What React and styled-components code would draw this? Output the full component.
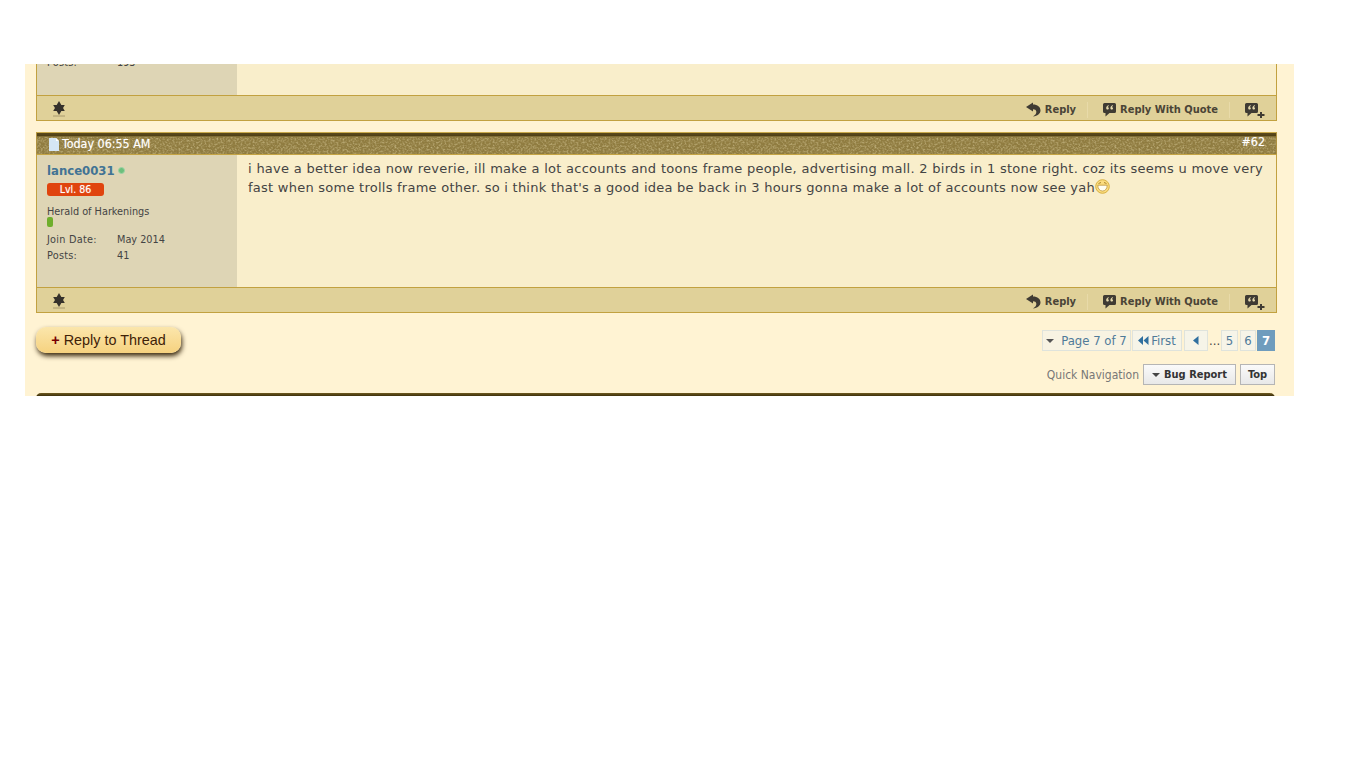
import React from "react";
import styled, { createGlobalStyle } from "styled-components";

const GlobalStyle = createGlobalStyle`
  html, body { margin: 0; padding: 0; background: #fff; }
  body { font-family: "DejaVu Sans", Verdana, sans-serif; }
`;

// speckled leather strip of the post header, dark and light grain
const grain = `url("data:image/svg+xml,%3Csvg xmlns='http://www.w3.org/2000/svg' width='240' height='24'%3E%3Cfilter id='d' x='0' y='0' width='100%25' height='100%25'%3E%3CfeTurbulence type='fractalNoise' baseFrequency='.55 .5' numOctaves='4' seed='3' stitchTiles='stitch'/%3E%3CfeColorMatrix values='0 0 0 0 .3 0 0 0 0 .23 0 0 0 0 .07 1.8 0 0 0 -.75'/%3E%3C/filter%3E%3Cfilter id='l' x='0' y='0' width='100%25' height='100%25'%3E%3CfeTurbulence type='fractalNoise' baseFrequency='.5 .55' numOctaves='4' seed='8' stitchTiles='stitch'/%3E%3CfeColorMatrix values='0 0 0 0 .72 0 0 0 0 .62 0 0 0 0 .34 0 1.4 0 0 -.6'/%3E%3C/filter%3E%3Cg%3E%3Crect y='4' width='240' height='20' filter='url(%23d)'/%3E%3Crect y='4' width='240' height='20' filter='url(%23l)'/%3E%3C/g%3E%3C/svg%3E")`;

const Page = styled.div`
  width: 1269px;
  height: 332px;
  margin: 64px 0 0 25px;
  padding: 0 17px 0 11px;
  box-sizing: border-box;
  background: #fff3d3;
  overflow: hidden;
`;

const Post = styled.article`
  margin-top: ${(p) => p.$top ?? 11}px;
  width: 1241px;
`;

const PostHead = styled.header`
  height: 23px;
  box-sizing: border-box;
  padding: 0 11px;
  display: flex;
  justify-content: space-between;
  background: ${grain}, linear-gradient(#5c4b1d 0, #4f3f15 3px, #7d6a32 3px, #8f7b3f 5px, #8f7b3f 100%);
  border-top: 1px solid #c9a94a;
  border-bottom: 1px solid #c4a444;
  border-left: 1px solid #b0923f;
  border-right: 1px solid #b0923f;
  color: #fff;
  font-family: "DejaVu Sans Condensed", "DejaVu Sans", sans-serif;
  font-size: 12.4px;
  line-height: 22px;
  text-shadow: 0 0 1px rgba(255, 255, 255, 0.45);
`;

const PostDate = styled.span`
  display: flex;
  align-items: center;
  gap: 2px;
  height: 22px;
`;

const PostNumber = styled.a`
  margin-top: -2px;
  color: #fff;
`;

const PostBody = styled.div`
  display: grid;
  grid-template-columns: 200px 1fr;
  height: ${(p) => p.$height}px;
  border-left: 1px solid #c2a140;
  border-right: 1px solid #c2a140;
  box-sizing: border-box;
`;

const Side = styled.aside`
  background: #ded5b5;
  padding: 6px 10px 0;
  color: #444;
  font-family: "DejaVu Sans Condensed", "DejaVu Sans", sans-serif;
  font-size: 10.8px;
`;

const UserName = styled.div`
  display: flex;
  align-items: center;
  gap: 3px;
  height: 18px;
  color: #417394;
  font-size: 13px;
  font-weight: 700;
`;

const Online = styled.i`
  width: 5px;
  height: 5px;
  border-radius: 50%;
  background: #6cc07c;
  border: 1px solid #9fd3a6;
`;

const Level = styled.div`
  width: 57px;
  height: 13px;
  margin-top: 4px;
  border-radius: 3px;
  background: #e0440e;
  color: #fff;
  font-size: 10.5px;
  line-height: 13px;
  text-align: center;
  text-shadow: 0 0 1px rgba(255, 255, 255, 0.5);
`;

const UserTitle = styled.div`
  margin-top: 9px;
  line-height: 13px;
`;

const RepBar = styled.div`
  width: 6px;
  height: 10px;
  margin-top: -1px;
  border-radius: 2px;
  background: #6fae2c;
`;

const Stats = styled.dl`
  display: grid;
  grid-template-columns: 70px 1fr;
  grid-auto-rows: 16px;
  margin: ${(p) => p.$top ?? 5}px 0 0;
  line-height: 16px;
  dt { letter-spacing: 0.25px; }
  dd { margin: 0; }
`;

const Message = styled.div`
  background: #f9eecb;
  padding: 4px 13px 0 11px;
  color: #444;
  font-size: 13px;
  line-height: 19px;
  letter-spacing: 0.25px;
  text-align: justify;
`;

const Smiley = styled.svg`
  width: 15px;
  height: 15px;
  vertical-align: -2px;
`;

const PostTools = styled.footer`
  height: 26px;
  box-sizing: border-box;
  display: flex;
  align-items: center;
  padding: 3px 11px 0 14px;
  background: #e0d199;
  border: 1px solid #c2a140;
  color: #4a4436;
  font-family: "DejaVu Sans Condensed", "DejaVu Sans", sans-serif;
  font-size: 11px;
  font-weight: 700;
`;

const ToolSpacer = styled.div`
  flex: 1;
`;

const Tool = styled.a`
  display: flex;
  align-items: center;
  gap: ${(p) => p.$gap ?? 4}px;
  height: 16px;
  padding: 0 ${(p) => p.$pad ?? 11}px 0 14px;
  border-right: ${(p) => (p.$pad === 0 ? "none" : "1px solid #e8daa9")};
  svg { flex: none; }
`;

const StarWrap = styled.span`
  display: flex;
  margin-top: -3px;
`;

const ActionRow = styled.div`
  display: flex;
  justify-content: space-between;
  align-items: flex-start;
  height: 37px;
  margin-top: 14px;
`;

const ReplyButton = styled.a`
  box-sizing: border-box;
  width: 145px;
  height: 26px;
  border-radius: 10px;
  background: linear-gradient(#fbe6ac, #f6d27f);
  box-shadow: 1px 3px 5px #3b2a10;
  color: #3f2208;
  font-family: "Liberation Sans", Arial, sans-serif;
  font-size: 14.4px;
  line-height: 26px;
  text-align: center;
  b { color: #700; margin-right: 4px; }
`;

const Pager = styled.nav`
  display: flex;
  align-items: center;
  margin: 3px 2px 0 0;
  color: #4f7a99;
  font-family: "DejaVu Sans Condensed", "DejaVu Sans", sans-serif;
  font-size: 13px;
`;

const PageCell = styled.a`
  display: flex;
  align-items: center;
  justify-content: center;
  gap: 2px;
  box-sizing: border-box;
  width: ${(p) => p.$width}px;
  height: 21px;
  margin-left: ${(p) => p.$ml ?? 0}px;
  background: ${(p) => (p.$on ? "#6f9cbd" : p.$soft ? "#f8f3e2" : "#f6f4e8")};
  border: 1px solid ${(p) => (p.$on ? "#6f9cbd" : "#dfe3dc")};
  color: ${(p) => (p.$on ? "#fff" : "#4f7a99")};
  font-weight: ${(p) => (p.$on ? 700 : 400)};
`;

const Dots = styled.span`
  width: 11px;
  margin-left: 1px;
  color: #444;
`;

const NavRow = styled.div`
  display: flex;
  justify-content: flex-end;
  align-items: center;
  gap: 4px;
  height: 21px;
  padding-right: 2px;
  color: #777;
  font-family: "DejaVu Sans Condensed", "DejaVu Sans", sans-serif;
  font-size: 12px;
`;

const NavButton = styled.a`
  display: flex;
  align-items: center;
  justify-content: center;
  gap: 2px;
  box-sizing: border-box;
  width: ${(p) => p.$width}px;
  height: 21px;
  background: linear-gradient(#fafafa, #e8e8e8);
  border: 1px solid #b5b5b5;
  color: #333;
  font-size: 11px;
  font-weight: 700;
`;

const Caret = styled.i`
  width: 0;
  height: 0;
  margin-right: ${(p) => p.$gap || 2}px;
  border-top: 4px solid ${(p) => p.$color || "#555"};
  border-left: 4px solid transparent;
  border-right: 4px solid transparent;
`;

const FooterBar = styled.div`
  height: 6px;
  margin: 8px 2px 0 0;
  border-radius: 5px 5px 0 0;
  background: linear-gradient(#6e5a1f, #3d300c 3px);
`;

const PaperIcon = () => (
  <svg width="12" height="13" viewBox="0 0 12 13">
    <path d="M1 0h7l3 3v10H1z" fill="#d5e6f5" />
    <path d="M8 0l3 3H8z" fill="#fff" />
  </svg>
);

const StarIcon = () => (
  <svg width="16" height="17" viewBox="0 0 16 17" fill="#35312b">
    <path d="M8 1l5.800 10H2.200z" />
    <path d="M8 15L2.200 5h11.600z" />
    <path d="M2 16h12" stroke="#9c8d62" strokeWidth="0.8" />
  </svg>
);

const ReplyIcon = () => (
  <svg width="15" height="15" viewBox="0 0 15 15" fill="#3f3b33">
    <path d="M7 .5v2C11.500 2.500 14.500 5 14.500 8.500c0 3-3 5.500-7.500 6 2.500-1.500 3.500-3 3.300-5C10 8 9 7.300 7 7.300V9.500L0 5z" />
  </svg>
);

const QuoteIcon = ({ plus }) => (
  <svg width={plus ? 21 : 15} height="16" viewBox={plus ? "0 0 21 16" : "0 0 15 16"} fill="#3f3b33">
    <path d="M2.500 1h10a1.500 1.500 0 0 1 1.500 1.500v7a1.500 1.500 0 0 1-1.500 1.500H7.500L3.500 14.500V11h-1A1.500 1.500 0 0 1 1 9.500v-7A1.500 1.500 0 0 1 2.500 1z" />
    <path d="M6.800 3.200c-1.500.3-2.600 1.300-2.600 2.900 0 1 .6 1.500 1.300 1.500s1.300-.5 1.300-1.200-.5-1.200-1.200-1.200c.1-.5.5-.9 1.200-1.100zM11 3.200c-1.500.3-2.600 1.300-2.600 2.900 0 1 .6 1.500 1.300 1.500S11 7.100 11 6.400s-.5-1.200-1.200-1.200c.1-.5.5-.9 1.200-1.100z" fill="#e8dcae" />
    {plus && <path d="M16 10h2v2h2.500v2H18v2h-2v-2h-2.500v-2H16z" />}
  </svg>
);

const SmileFace = () => (
  <Smiley viewBox="0 0 15 15">
    <circle cx="7.500" cy="7.500" r="6.800" fill="#fbdc7f" stroke="#d8b040" />
    <path d="M3.500 4.500l2.500-1M11.500 4.500L9 3.500" stroke="#a67c20" strokeWidth="0.9" fill="none" />
    <path d="M2.800 6.200h9.400c0 3.600-2 5.800-4.700 5.800S2.800 9.800 2.800 6.200z" fill="#fffdf0" stroke="#b58a28" strokeWidth="0.7" />
  </Smiley>
);

const Tools = () => (
  <PostTools>
    <StarWrap><StarIcon /></StarWrap>
    <ToolSpacer />
    <Tool><ReplyIcon />Reply</Tool>
    <Tool $pad={11} $gap={3}><QuoteIcon />Reply With Quote</Tool>
    <Tool $pad={0}><QuoteIcon plus /></Tool>
  </PostTools>
);

const App = () => (
  <>
    <GlobalStyle />
    <Page>
      <Post $top={0}>
        <PostBody $height={31}>
          <Side>
            <Stats $top={-15}>
              <dt>Posts:</dt>
              <dd>193</dd>
            </Stats>
          </Side>
          <Message />
        </PostBody>
        <Tools />
      </Post>

      <Post>
        <PostHead>
          <PostDate><PaperIcon />Today 06:55 AM</PostDate>
          <PostNumber>#62</PostNumber>
        </PostHead>
        <PostBody $height={132}>
          <Side>
            <UserName>lance0031<Online /></UserName>
            <Level>Lvl. 86</Level>
            <UserTitle>Herald of Harkenings</UserTitle>
            <RepBar />
            <Stats>
              <dt>Join Date:</dt>
              <dd>May 2014</dd>
              <dt>Posts:</dt>
              <dd>41</dd>
            </Stats>
          </Side>
          <Message>
            i have a better idea now reverie, ill make a lot accounts and toons frame people, advertising mall. 2 birds in 1 stone right. coz its seems u move very fast when some trolls frame other. so i think that's a good idea be back in 3 hours gonna make a lot of accounts now see yah<SmileFace />
          </Message>
        </PostBody>
        <Tools />
      </Post>

      <ActionRow>
        <ReplyButton><b>+</b>Reply to Thread</ReplyButton>
        <Pager>
          <PageCell $soft $width={89}><Caret $gap={5} />Page 7 of 7</PageCell>
          <PageCell $width={50} $ml={1}>
            <svg width="11" height="9" viewBox="0 0 11 9" fill="#2f6f9f"><path d="M5 0v9L0 4.500zM10.500 0v9L5.500 4.500z" /></svg>
            First
          </PageCell>
          <PageCell $width={24} $ml={2}>
            <svg width="6" height="9" viewBox="0 0 6 9" fill="#2f6f9f"><path d="M5.500 0v9L0 4.500z" /></svg>
          </PageCell>
          <Dots>...</Dots>
          <PageCell $width={17} $ml={1}>5</PageCell>
          <PageCell $width={16} $ml={2}>6</PageCell>
          <PageCell $on $width={18} $ml={1}>7</PageCell>
        </Pager>
      </ActionRow>

      <NavRow>
        Quick Navigation
        <NavButton $width={93}><Caret $color="#444" />Bug Report</NavButton>
        <NavButton $width={35}>Top</NavButton>
      </NavRow>

      <FooterBar />
    </Page>
  </>
);

export default App;
